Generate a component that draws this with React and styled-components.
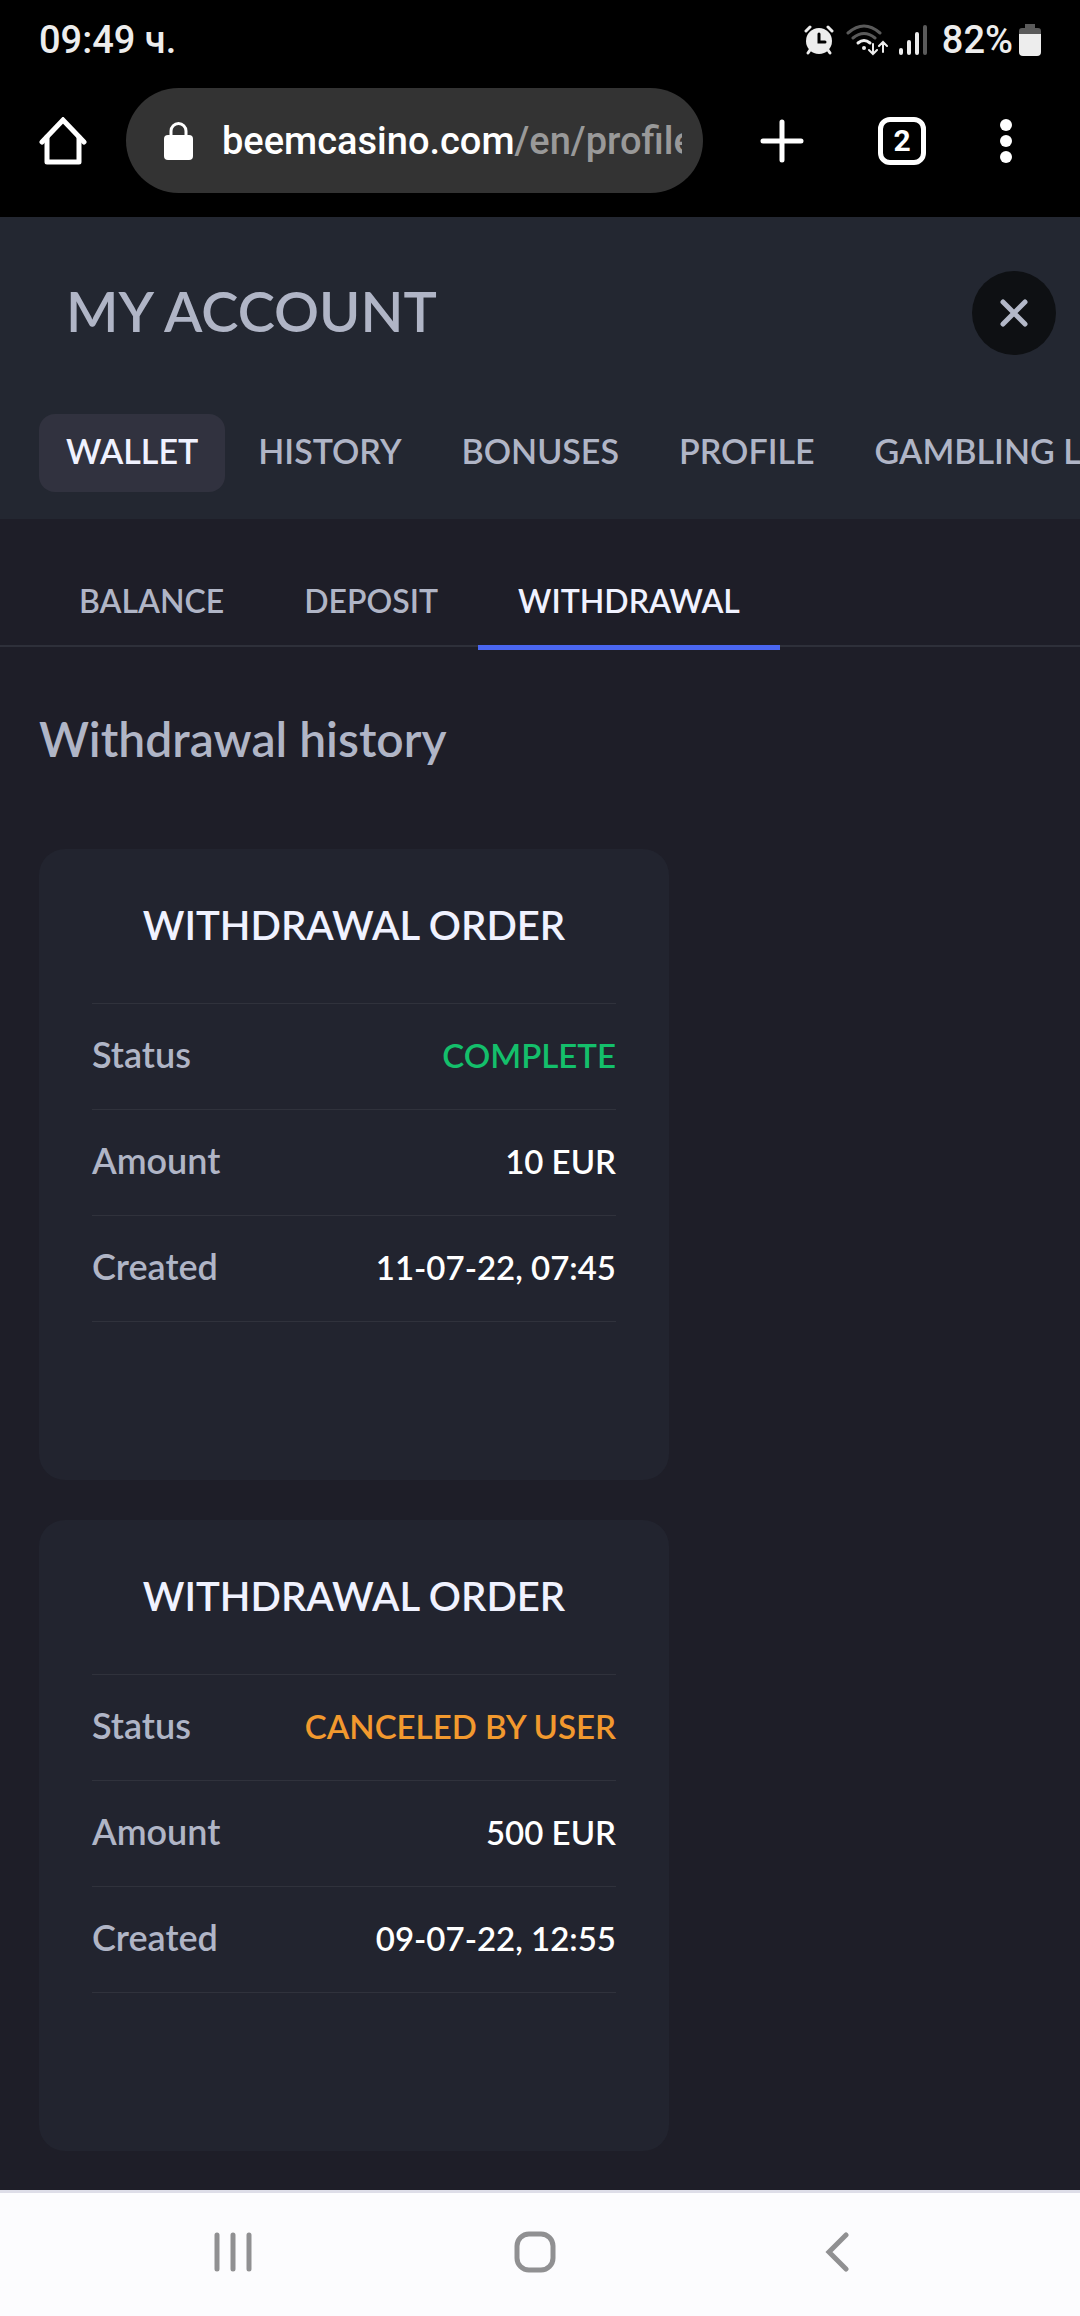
import React from 'react';
import styled, { createGlobalStyle } from 'styled-components';

const orders = [
  { id: 1, status: 'COMPLETE', color: '#14bf6b', amount: '10 EUR', created: '11-07-22, 07:45' },
  { id: 2, status: 'CANCELED BY USER', color: '#f2992e', amount: '500 EUR', created: '09-07-22, 12:55' },
];

const sections = ['WALLET', 'HISTORY', 'BONUSES', 'PROFILE', 'GAMBLING LIMITS'];
const walletTabs = ['BALANCE', 'DEPOSIT', 'WITHDRAWAL'];

function StatusBar() {
  return (
    <Status>
      <time>09:49 ч.</time>
      <StatusIcons>
        {/* alarm */}
        <svg width="32" height="30" viewBox="0 0 32 30" fill="none" strokeLinecap="round">
          <circle cx="15" cy="16" r="13" fill="#ededed" />
          <path d="M2 6L6 2M28 6L24 2M6 25L4 28M24 25L26 28" stroke="#ededed" strokeWidth="3" />
          <path d="M15 9v8h6" stroke="#000" strokeWidth="3" />
        </svg>
        {/* wifi */}
        <svg width="42" height="32" viewBox="0 0 42 32" fill="none" strokeWidth="3" strokeLinecap="round">
          <path d="M2 9Q18 -5 34 9M7 14Q18 5 29 14" stroke="#5a5a5a" />
          <path d="M12 19Q18 14 24 19" stroke="#ededed" />
          <circle cx="18" cy="24" r="2" fill="#ededed" />
          <path d="M27 20v10M23 26l4 4l4-4M37 28V18M33 22l4-4l4 4" stroke="#ededed" strokeWidth="2" />
        </svg>
        {/* signal */}
        <svg width="30" height="30" viewBox="0 0 30 30" fill="none" strokeWidth="4" strokeLinecap="round">
          <path d="M3 25v3M11 17v11M19 9v19" stroke="#ededed" />
          <path d="M27 2v26" stroke="#5a5a5a" />
        </svg>
        <Percent>82%</Percent>
        <svg width="22" height="34" viewBox="0 0 22 34">
          <path d="M6 1h10v4h3q3 0 3 3v4H0V8q0-3 3-3h3z" fill="#5a5a5a" />
          <path d="M0 11h22v18q0 4-4 4H4q-4 0-4-4z" fill="#ededed" />
        </svg>
      </StatusIcons>
    </Status>
  );
}

function BrowserBar() {
  return (
    <Toolbar>
      <IconButton aria-label="Home">
        <svg width="48" height="48" viewBox="0 0 48 48" fill="none" stroke="#fff" strokeWidth="5" strokeLinecap="round" strokeLinejoin="round">
          <path d="M3 25L24 3L45 25" strokeLinejoin="miter" />
          <path d="M8 20V45H40V20" />
        </svg>
      </IconButton>
      <AddressBar aria-label="Address">
        <svg width="30" height="38" viewBox="0 0 30 38">
          <rect x="0" y="13" width="29" height="25" rx="4" fill="#fff" />
          <path d="M7 14V9a7 7 0 0 1 15 0V14" fill="none" stroke="#fff" strokeWidth="3" />
        </svg>
        <Url>beemcasino.com<Path>/en/profile</Path></Url>
      </AddressBar>
      <Actions>
        <IconButton aria-label="New tab">
          <svg width="44" height="44" viewBox="0 0 44 44" stroke="#fff" strokeWidth="5" strokeLinecap="round">
            <path d="M22 3V41M3 22H41" />
          </svg>
        </IconButton>
        <TabCount aria-label="Open tabs">2</TabCount>
        <IconButton aria-label="Menu">
          <svg width="12" height="44" viewBox="0 0 12 44" fill="#fff">
            <circle cx="6" cy="6" r="6" />
            <circle cx="6" cy="22" r="6" />
            <circle cx="6" cy="38" r="6" />
          </svg>
        </IconButton>
      </Actions>
    </Toolbar>
  );
}

function OrderCard({ order }) {
  return (
    <Card>
      <CardTitle>WITHDRAWAL ORDER</CardTitle>
      <Details>
        <Row>
          <Label>Status</Label>
          <Value $color={order.color}>{order.status}</Value>
        </Row>
        <Row>
          <Label>Amount</Label>
          <Value>{order.amount}</Value>
        </Row>
        <Row>
          <Label>Created</Label>
          <Value>{order.created}</Value>
        </Row>
      </Details>
    </Card>
  );
}

function App() {
  return (
    <Page>
      <GlobalStyle />
      <StatusBar />
      <BrowserBar />
      <Header>
        <TitleRow>
          <Title>MY ACCOUNT</Title>
          <CloseButton aria-label="Close">
            <svg width="28" height="28" viewBox="0 0 28 28" stroke="#b3b8c8" strokeWidth="5" strokeLinecap="round">
              <path d="M3 3L25 25M25 3L3 25" />
            </svg>
          </CloseButton>
        </TitleRow>
        <Sections>
          {sections.map((name) => (
            <SectionLink href="#" key={name} $active={name === 'WALLET'}>{name}</SectionLink>
          ))}
        </Sections>
      </Header>
      <Tabs>
        {walletTabs.map((name) => (
          <TabLink href="#" key={name} $active={name === 'WITHDRAWAL'}>{name}</TabLink>
        ))}
      </Tabs>
      <Main>
        <Heading>Withdrawal history</Heading>
        <Orders>
          {orders.map((order) => <OrderCard key={order.id} order={order} />)}
        </Orders>
      </Main>
      <SystemNav>
        <IconButton aria-label="Recent apps">
          <svg width="38" height="42" viewBox="0 0 38 42" stroke="#909092" strokeWidth="5" strokeLinecap="round">
            <path d="M3 4V38M19 4V38M35 4V38" />
          </svg>
        </IconButton>
        <IconButton aria-label="Home screen">
          <svg width="42" height="42" viewBox="0 0 42 42" fill="none" stroke="#909092" strokeWidth="5">
            <rect x="3" y="3" width="36" height="36" rx="12" />
          </svg>
        </IconButton>
        <IconButton aria-label="Back">
          <svg width="24" height="42" viewBox="0 0 24 42" fill="none" stroke="#909092" strokeWidth="5" strokeLinecap="round">
            <path d="M21 4L4 21L21 38" />
          </svg>
        </IconButton>
      </SystemNav>
    </Page>
  );
}

// Styling
const GlobalStyle = createGlobalStyle`
  * {
    box-sizing: border-box;
  }
  body {
    margin: 0;
    background-color: #1e1e28;
  }
  svg {
    display: block;
    flex: none;
  }
`
const Page = styled.div`
  display: flex;
  flex-direction: column;
  min-height: 100vh;
  overflow-x: hidden;
  font-family: Lato, "Liberation Sans", sans-serif;
  font-weight: 600;
  color: #b0b5c6;
`
const Status = styled.div`
  display: flex;
  justify-content: space-between;
  align-items: center;
  height: 80px;
  padding: 0 39px;
  background-color: #000;
  color: #ededed;
  font: 500 38px/80px Roboto, sans-serif;
`
const StatusIcons = styled.div`
  display: flex;
  align-items: center;
  gap: 10px;
`
const Percent = styled.span`
  margin: 0 -4px 0 4px;
`
const IconButton = styled.button`
  display: flex;
  align-items: center;
  justify-content: center;
  padding: 0;
  border: none;
  background: none;
`
const Toolbar = styled.div`
  display: flex;
  align-items: center;
  padding: 8px 68px 24px 39px;
  background-color: #000;
`
const AddressBar = styled.button`
  display: flex;
  align-items: center;
  flex: 1;
  min-width: 0;
  height: 105px;
  margin-left: 39px;
  padding: 0 21px 0 38px;
  gap: 28px;
  border: none;
  border-radius: 53px;
  background-color: #333;
`
const Url = styled.span`
  flex: 1;
  min-width: 0;
  overflow: hidden;
  white-space: nowrap;
  text-align: left;
  font: 500 38px/56px Roboto, sans-serif;
  color: #fff;
`
const Path = styled.span`
  color: #999;
`
const Actions = styled.div`
  display: flex;
  align-items: center;
  gap: 74px;
  margin-left: 57px;
`
const TabCount = styled.button`
  width: 48px;
  height: 48px;
  padding: 0;
  border: 5px solid #fff;
  border-radius: 12px;
  background: none;
  color: #fff;
  font: 700 30px/38px Roboto, sans-serif;
`
const Header = styled.header`
  padding: 54px 0 27px;
  background-color: #232731;
`
const TitleRow = styled.div`
  display: flex;
  justify-content: space-between;
  align-items: flex-start;
  padding: 0 24px 0 66px;
`
const Title = styled.h1`
  margin: 0;
  font-size: 56px;
  font-weight: inherit;
  line-height: 80px;
`
const CloseButton = styled(IconButton)`
  width: 84px;
  height: 84px;
  border-radius: 50%;
  background-color: #0e1013;
`
const Sections = styled.nav`
  display: flex;
  gap: 6px;
  margin-top: 59px;
  padding-left: 39px;
  overflow: hidden;
`
const SectionLink = styled.a`
  flex: none;
  height: 78px;
  padding: 0 27px;
  border-radius: 16px;
  background-color: ${({ $active }) => ($active ? '#31323f' : 'transparent')};
  color: ${({ $active }) => ($active ? '#f0f2ff' : 'inherit')};
  font-size: 34px;
  line-height: 74px;
  text-decoration: none;
`
const Tabs = styled.nav`
  display: flex;
  height: 128px;
  padding: 36px 39px 0;
  border-bottom: 2px solid #2e303a;
`
const TabLink = styled.a`
  height: 95px;
  padding: 0 40px;
  border-bottom: 5px solid ${({ $active }) => ($active ? '#4a66f0' : 'transparent')};
  color: ${({ $active }) => ($active ? '#f0f2ff' : 'inherit')};
  font-size: 32px;
  line-height: 92px;
  text-decoration: none;
`
const Main = styled.main`
  flex: 1;
  padding: 60px 39px 39px;
`
const Heading = styled.h2`
  margin: 0 0 78px;
  font-size: 48px;
  font-weight: inherit;
  line-height: 64px;
`
const Orders = styled.div`
  display: grid;
  grid-template-columns: minmax(0, 630px);
  gap: 40px;
`
const Card = styled.article`
  min-height: 631px;
  padding: 40px 53px;
  border-radius: 26px;
  background-color: #22242f;
`
const CardTitle = styled.h3`
  margin: 0 0 42px;
  text-align: center;
  font-size: 40px;
  font-weight: inherit;
  line-height: 72px;
  color: #f0f2ff;
`
const Details = styled.dl`
  margin: 0;
  border-top: 1px solid #30323c;
`
const Row = styled.div`
  display: flex;
  justify-content: space-between;
  align-items: baseline;
  height: 106px;
  border-bottom: 1px solid #30323c;
  line-height: 100px;
`
const Label = styled.dt`
  font-size: 36px;
`
const Value = styled.dd`
  margin: 0;
  font-size: 33px;
  color: ${({ $color }) => $color || '#fff'};
`
const SystemNav = styled.nav`
  display: grid;
  grid-template-columns: repeat(3, 1fr);
  height: 126px;
  padding: 0 92px 6px 82px;
  border-top: 3px solid #dddde8;
  background-color: #fcfcfe;
`

export default App;
